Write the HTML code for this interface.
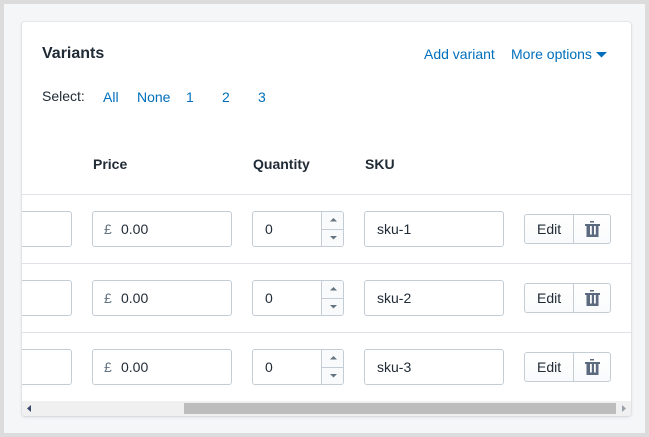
<!DOCTYPE html>
<html>
<head>
<meta charset="utf-8">
<style>
html,body{margin:0;padding:0;width:649px;height:437px;overflow:hidden}
body{position:relative;background:#f4f6f8;font-family:"Liberation Sans",sans-serif;font-size:14px;color:#212b36}
.frame{position:absolute;left:0;top:0;width:641px;height:429px;border:4px solid #dcdcdc}
.card{position:absolute;left:22px;top:22px;width:609px;height:394px;background:#fff;border-radius:3px;box-shadow:0 0 0 1px rgba(63,63,68,.05),0 1px 3px rgba(63,63,68,.15);overflow:hidden}
.t{position:absolute;white-space:nowrap;line-height:20px}
.l{color:#006fbb}
.b{font-weight:bold}
.hr{position:absolute;left:22px;width:609px;height:1px;background:#dfe3e8}
.in{position:absolute;box-sizing:border-box;height:36px;background:#fff;border:1px solid #c4cdd5;border-radius:3px}
.btn{position:absolute;box-sizing:border-box;left:524px;width:87px;height:30px;border:1px solid #c4cdd5;border-radius:3px;background:linear-gradient(#fff,#f9fafb)}
.btn i{position:absolute;left:48px;top:0;width:1px;height:28px;background:#c4cdd5}
.st{position:absolute;left:252px;box-sizing:border-box;width:92px;height:36px;background:#fff;border:1px solid #c4cdd5;border-radius:3px}
.st .v{position:absolute;left:68px;top:0;width:1px;height:34px;background:#c4cdd5}
.st .h{position:absolute;left:69px;top:17px;width:21px;height:1px;background:#c4cdd5}
.st .bg{position:absolute;left:69px;top:0;width:21px;height:34px;background:#f9fafb;border-radius:0 2px 2px 0}
.clip{position:absolute;left:22px;width:50px;height:36px;overflow:hidden}
.clip div{position:absolute;left:-100px;top:0;width:150px;height:36px;box-sizing:border-box;background:#fff;border:1px solid #c4cdd5;border-radius:3px}
svg{position:absolute;display:block}
</style>
</head>
<body>
<div class="frame"></div>
<div class="card"></div>

<div class="t b" style="left:42px;top:44px;font-size:16px">Variants</div>
<div class="t l" style="left:424px;top:44px">Add variant</div>
<div class="t l" style="left:511px;top:44px">More options</div>
<svg style="left:596px;top:52px" width="11" height="6"><path d="M0 0H11L5.5 5.500Z" fill="#006fbb"/></svg>

<div class="t" style="left:42px;top:86px">Select:</div>
<div class="t l" style="left:103px;top:87px">All</div>
<div class="t l" style="left:137px;top:87px">None</div>
<div class="t l" style="left:186px;top:87px">1</div>
<div class="t l" style="left:222px;top:87px">2</div>
<div class="t l" style="left:258px;top:87px">3</div>

<div class="t b" style="left:93px;top:154px">Price</div>
<div class="t b" style="left:253px;top:154px">Quantity</div>
<div class="t b" style="left:365px;top:154px">SKU</div>

<div class="hr" style="top:194px"></div>
<div class="hr" style="top:263px"></div>
<div class="hr" style="top:332px"></div>

<!-- Row 1 -->
<div class="clip" style="top:211px"><div></div></div>
<div class="in" style="left:92px;top:211px;width:140px"></div>
<div class="t" style="left:104px;top:219px;color:#637381">£</div>
<div class="t" style="left:121px;top:219px">0.00</div>
<div class="st" style="top:211px"><div class="bg"></div><div class="v"></div><div class="h"></div></div>
<svg style="left:330px;top:218px" width="8" height="4"><path d="M3.500 0 7 3.500H0Z" fill="#637381"/></svg>
<svg style="left:330px;top:236px" width="8" height="4"><path d="M0 0H7L3.500 3.500Z" fill="#637381"/></svg>
<div class="t" style="left:265px;top:219px">0</div>
<div class="in" style="left:364px;top:211px;width:140px"></div>
<div class="t" style="left:377px;top:219px">sku-1</div>
<div class="btn" style="top:214px"><i></i></div>
<div class="t" style="left:537px;top:219px">Edit</div>
<svg style="left:585px;top:221px" width="15" height="17" fill="#5c6a7f"><path d="M5 0H9V1.500H5ZM0 3H15V5H0ZM1.500 5H13.500V16H1.500ZM5 5V13.500H6.800V5ZM9 5V13.500H10.800V5Z" fill-rule="evenodd"/></svg>

<!-- Row 2 -->
<div class="clip" style="top:280px"><div></div></div>
<div class="in" style="left:92px;top:280px;width:140px"></div>
<div class="t" style="left:104px;top:288px;color:#637381">£</div>
<div class="t" style="left:121px;top:288px">0.00</div>
<div class="st" style="top:280px"><div class="bg"></div><div class="v"></div><div class="h"></div></div>
<svg style="left:330px;top:287px" width="8" height="4"><path d="M3.500 0 7 3.500H0Z" fill="#637381"/></svg>
<svg style="left:330px;top:305px" width="8" height="4"><path d="M0 0H7L3.500 3.500Z" fill="#637381"/></svg>
<div class="t" style="left:265px;top:288px">0</div>
<div class="in" style="left:364px;top:280px;width:140px"></div>
<div class="t" style="left:377px;top:288px">sku-2</div>
<div class="btn" style="top:283px"><i></i></div>
<div class="t" style="left:537px;top:288px">Edit</div>
<svg style="left:585px;top:290px" width="15" height="17" fill="#5c6a7f"><path d="M5 0H9V1.500H5ZM0 3H15V5H0ZM1.500 5H13.500V16H1.500ZM5 5V13.500H6.800V5ZM9 5V13.500H10.800V5Z" fill-rule="evenodd"/></svg>

<!-- Row 3 -->
<div class="clip" style="top:349px"><div></div></div>
<div class="in" style="left:92px;top:349px;width:140px"></div>
<div class="t" style="left:104px;top:357px;color:#637381">£</div>
<div class="t" style="left:121px;top:357px">0.00</div>
<div class="st" style="top:349px"><div class="bg"></div><div class="v"></div><div class="h"></div></div>
<svg style="left:330px;top:356px" width="8" height="4"><path d="M3.500 0 7 3.500H0Z" fill="#637381"/></svg>
<svg style="left:330px;top:374px" width="8" height="4"><path d="M0 0H7L3.500 3.500Z" fill="#637381"/></svg>
<div class="t" style="left:265px;top:357px">0</div>
<div class="in" style="left:364px;top:349px;width:140px"></div>
<div class="t" style="left:377px;top:357px">sku-3</div>
<div class="btn" style="top:352px"><i></i></div>
<div class="t" style="left:537px;top:357px">Edit</div>
<svg style="left:585px;top:359px" width="15" height="17" fill="#5c6a7f"><path d="M5 0H9V1.500H5ZM0 3H15V5H0ZM1.500 5H13.500V16H1.500ZM5 5V13.500H6.800V5ZM9 5V13.500H10.800V5Z" fill-rule="evenodd"/></svg>

<!-- Scrollbar -->
<div style="position:absolute;left:22px;top:401px;width:609px;height:15px;background:#f0f0f0;border-radius:0 0 3px 3px"></div>
<div style="position:absolute;left:184px;top:403px;width:432px;height:11px;background:#bdbdbd"></div>
<svg style="left:27px;top:405px" width="5" height="8"><path d="M4 0V7L0 3.500Z" fill="#37476b"/></svg>
<svg style="left:622px;top:405px" width="5" height="8"><path d="M0 0V7L4 3.500Z" fill="#9aa0aa"/></svg>
</body>
</html>
